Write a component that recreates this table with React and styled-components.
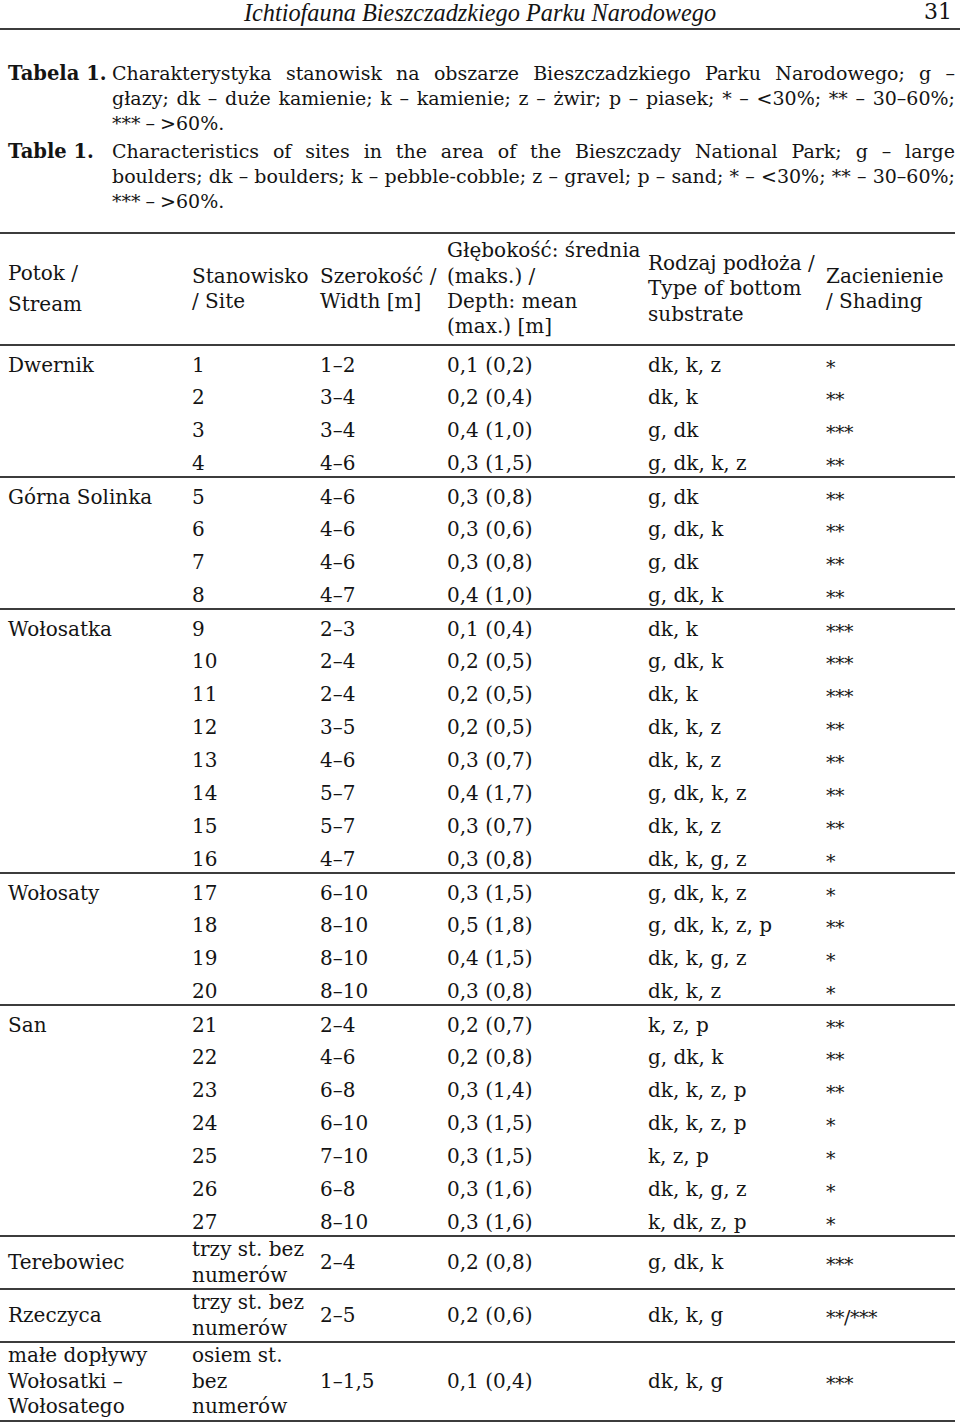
import React from 'react';
import styled, { createGlobalStyle } from 'styled-components';

const GlobalStyle = createGlobalStyle`
  html, body {
    margin: 0;
    padding: 0;
    background: #fff;
  }
  body {
    font-family: 'DejaVu Serif', 'Liberation Serif', serif;
    color: #141414;
  }
`;

const rule = '2px solid #3c3c3c';

const Page = styled.div`
  width: 960px;
  height: 1425px;
  overflow: hidden;
  background: #fff;
`;

const RunningHead = styled.header`
  display: grid;
  grid-template-columns: 1fr auto 1fr;
  align-items: start;
  height: 28px;
  border-bottom: ${rule};
`;

const HeadTitle = styled.div`
  grid-column: 2;
  font-family: 'Liberation Serif', serif;
  font-style: italic;
  font-size: 24.3px;
  line-height: 26px;
`;

const PageNo = styled.div`
  justify-self: end;
  padding-right: 8px;
  font-size: 22px;
  line-height: 24px;
`;

const Caption = styled.section`
  display: grid;
  grid-template-columns: 104px 1fr;
  row-gap: 3px;
  padding: 31px 5px 0 8px;
  font-size: 19px;
  line-height: 25px;
`;

const CaptionLabel = styled.div`
  font-weight: bold;
  font-size: 19.5px;
`;

const CaptionLine = styled.div`
  word-spacing: -1px;
  text-align: justify;
  text-align-last: ${p => (p.$last ? 'left' : 'justify')};
`;

const Table = styled.table`
  width: 955px;
  margin-top: 18px;
  table-layout: fixed;
  border-collapse: collapse;
  font-size: 20px;
  border-top: ${rule};
  border-bottom: ${rule};
`;

const HeadRow = styled.tr`
  border-bottom: ${rule};
`;

const Th = styled.th`
  box-sizing: border-box;
  width: ${p => p.$w}px;
  height: 112px;
  padding: 0 0 0 8px;
  text-align: left;
  font-weight: normal;
  line-height: ${p => p.$lh || 25.3}px;
  vertical-align: middle;
  white-space: nowrap;
`;

const Row = styled.tr`
  border-bottom: ${p => (p.$last ? rule : 'none')};
`;

const Td = styled.td`
  box-sizing: border-box;
  height: ${p => p.$h || 33}px;
  padding: ${p => (p.$h ? 0 : 5)}px 0 0 8px;
  line-height: ${p => (p.$h ? 25.5 : 26)}px;
  vertical-align: middle;
  white-space: nowrap;
`;

const Stars = styled.span`
  position: relative;
  top: 2px;
  font-size: 19px;
  letter-spacing: -0.5px;
`;

const columns = [
  { w: 184, text: ['Potok /', 'Stream'], lh: 31 },
  { w: 128, text: ['Stanowisko', '/ Site'] },
  { w: 127, text: ['Szerokość /', 'Width [m]'] },
  { w: 201, text: ['Głębokość: średnia', '(maks.) /', 'Depth: mean', '(max.) [m]'] },
  { w: 178, text: ['Rodzaj podłoża /', 'Type of bottom', 'substrate'] },
  { w: 137, text: ['Zacienienie', '/ Shading'] },
];

const captions = [
  {
    label: 'Tabela 1.',
    lines: [
      'Charakterystyka stanowisk na obszarze Bieszczadzkiego Parku Narodowego; g –',
      'głazy; dk – duże kamienie; k – kamienie; z – żwir; p – piasek; * – <30%; ** – 30–60%;',
      '*** – >60%.',
    ],
  },
  {
    label: 'Table 1.',
    lines: [
      'Characteristics of sites in the area of the Bieszczady National Park; g – large',
      'boulders; dk – boulders; k – pebble-cobble; z – gravel; p – sand; * – <30%; ** – 30–60%;',
      '*** – >60%.',
    ],
  },
];

const groups = [
  {
    name: 'Dwernik',
    rows: [
      ['1', '1–2', '0,1 (0,2)', 'dk, k, z', '*'],
      ['2', '3–4', '0,2 (0,4)', 'dk, k', '**'],
      ['3', '3–4', '0,4 (1,0)', 'g, dk', '***'],
      ['4', '4–6', '0,3 (1,5)', 'g, dk, k, z', '**'],
    ],
  },
  {
    name: 'Górna Solinka',
    rows: [
      ['5', '4–6', '0,3 (0,8)', 'g, dk', '**'],
      ['6', '4–6', '0,3 (0,6)', 'g, dk, k', '**'],
      ['7', '4–6', '0,3 (0,8)', 'g, dk', '**'],
      ['8', '4–7', '0,4 (1,0)', 'g, dk, k', '**'],
    ],
  },
  {
    name: 'Wołosatka',
    rows: [
      ['9', '2–3', '0,1 (0,4)', 'dk, k', '***'],
      ['10', '2–4', '0,2 (0,5)', 'g, dk, k', '***'],
      ['11', '2–4', '0,2 (0,5)', 'dk, k', '***'],
      ['12', '3–5', '0,2 (0,5)', 'dk, k, z', '**'],
      ['13', '4–6', '0,3 (0,7)', 'dk, k, z', '**'],
      ['14', '5–7', '0,4 (1,7)', 'g, dk, k, z', '**'],
      ['15', '5–7', '0,3 (0,7)', 'dk, k, z', '**'],
      ['16', '4–7', '0,3 (0,8)', 'dk, k, g, z', '*'],
    ],
  },
  {
    name: 'Wołosaty',
    rows: [
      ['17', '6–10', '0,3 (1,5)', 'g, dk, k, z', '*'],
      ['18', '8–10', '0,5 (1,8)', 'g, dk, k, z, p', '**'],
      ['19', '8–10', '0,4 (1,5)', 'dk, k, g, z', '*'],
      ['20', '8–10', '0,3 (0,8)', 'dk, k, z', '*'],
    ],
  },
  {
    name: 'San',
    rows: [
      ['21', '2–4', '0,2 (0,7)', 'k, z, p', '**'],
      ['22', '4–6', '0,2 (0,8)', 'g, dk, k', '**'],
      ['23', '6–8', '0,3 (1,4)', 'dk, k, z, p', '**'],
      ['24', '6–10', '0,3 (1,5)', 'dk, k, z, p', '*'],
      ['25', '7–10', '0,3 (1,5)', 'k, z, p', '*'],
      ['26', '6–8', '0,3 (1,6)', 'dk, k, g, z', '*'],
      ['27', '8–10', '0,3 (1,6)', 'k, dk, z, p', '*'],
    ],
  },
];

const extraRows = [
  { name: ['Terebowiec'], site: ['trzy st. bez', 'numerów'], vals: ['2–4', '0,2 (0,8)', 'g, dk, k', '***'], h: 52 },
  { name: ['Rzeczyca'], site: ['trzy st. bez', 'numerów'], vals: ['2–5', '0,2 (0,6)', 'dk, k, g', '**/***'], h: 51 },
  { name: ['małe dopływy', 'Wołosatki –', 'Wołosatego'], site: ['osiem st.', 'bez', 'numerów'], vals: ['1–1,5', '0,1 (0,4)', 'dk, k, g', '***'], h: 78 },
];

const Lines = ({ items }) =>
  items.map((t, i) => (
    <React.Fragment key={i}>
      {i > 0 && <br />}
      {t}
    </React.Fragment>
  ));

const Cells = ({ vals, h }) =>
  vals.map((v, j) => (
    <Td key={j} $h={h}>
      {j === vals.length - 1 ? <Stars>{v}</Stars> : v}
    </Td>
  ));

const App = () => (
  <Page>
    <GlobalStyle />
    <RunningHead>
      <HeadTitle>Ichtiofauna Bieszczadzkiego Parku Narodowego</HeadTitle>
      <PageNo>31</PageNo>
    </RunningHead>

    <Caption>
      {captions.map(c => (
        <React.Fragment key={c.label}>
          <CaptionLabel>{c.label}</CaptionLabel>
          <div>
            {c.lines.map((l, i) => (
              <CaptionLine key={i} $last={i === c.lines.length - 1}>
                {l}
              </CaptionLine>
            ))}
          </div>
        </React.Fragment>
      ))}
    </Caption>

    <Table>
      <thead>
        <HeadRow>
          {columns.map((c, i) => (
            <Th key={i} $w={c.w} $lh={c.lh}>
              <Lines items={c.text} />
            </Th>
          ))}
        </HeadRow>
      </thead>
      <tbody>
        {groups.map(g =>
          g.rows.map((r, i) => (
            <Row key={g.name + r[0]} $last={i === g.rows.length - 1}>
              <Td>{i === 0 ? g.name : ''}</Td>
              <Cells vals={r} />
            </Row>
          ))
        )}
        {extraRows.map((r, i) => (
          <Row key={i} $last={i < extraRows.length - 1}>
            <Td $h={r.h}>
              <Lines items={r.name} />
            </Td>
            <Td $h={r.h}>
              <Lines items={r.site} />
            </Td>
            <Cells vals={r.vals} h={r.h} />
          </Row>
        ))}
      </tbody>
    </Table>
  </Page>
);

export default App;
